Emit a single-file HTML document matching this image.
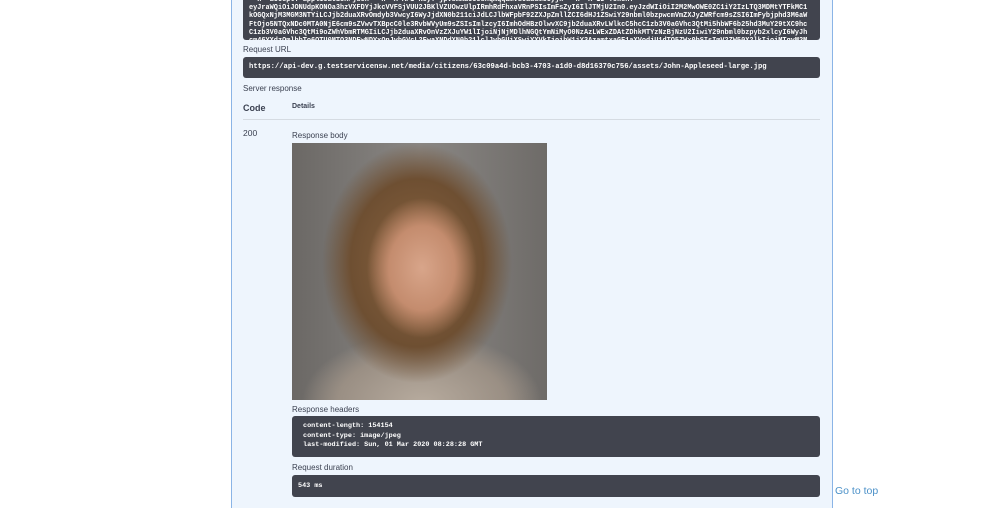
<!DOCTYPE html>
<html><head><style>
body{margin:0;width:999px;height:500px;overflow:hidden;background:#fff;font-family:"Liberation Sans",sans-serif;position:relative}
.panel{position:absolute;left:231px;top:-2px;width:600px;height:510px;background:#eef5fd;border-left:1px solid #8ab4e6;border-right:1px solid #8ab4e6}
.dark{position:absolute;background:#41444e;border-radius:3px;color:#fff;font-family:"Liberation Mono",monospace;font-weight:bold}
.lbl{position:absolute;font-size:8px;color:#3b4151}
.tok{left:243px;top:-4px;width:577px;height:44px;font-size:6.9px;line-height:8.2px;padding:0 6px;box-sizing:border-box;overflow:hidden;white-space:nowrap}
</style></head><body>
<div class="panel"></div>
<div class="dark tok">&nbsp;-H "accept: application/json" -H "X-API-Key: jpvsmmaccosnqmqqamvu6aasmccyjk" -H "X-ID-Token:<br>eyJraWQiOiJONUdpKONOa3hzVXFDYjJkcVVFSjVUU2JBKlVZUOwzUlpIRmhRdFhxaVRnPSIsImFsZyI6IlJTMjU2In0.eyJzdWIiOiI2M2MwOWE0ZC1iY2IzLTQ3MDMtYTFkMC1<br>kOGQxNjM3MGM3NTYiLCJjb2duaXRvOmdyb3VwcyI6WyJjdXN0b211ciJdLCJlbWFpbF92ZXJpZmllZCI6dHJ1ZSwiY29nbml0bzpwcmVmZXJyZWRfcm9sZSI6ImFybjphd3M6aW<br>FtOjo5NTQxNDc0MTA0NjE6cm9sZVwvTXBpcC0le3RvbWVyUm9sZSIsImlzcyI6ImhOdHBzOlwvXC9jb2duaXRvLWlkcC5hcC1zb3V0aGVhc3QtMi5hbWF6b25hd3MuY29tXC9hc<br>C1zb3V0aGVhc3QtMi9oZWhVbmRTMGIiLCJjb2duaXRvOnVzZXJuYW1lIjoiNjNjMDlhNGQtYmNiMyO0NzAzLWExZDAtZDhkMTYzNzBjNzU2IiwiY29nbml0bzpyb2xlcyI6WyJh<br>cm46YXdzOmlhbTo6OTU0MTQ3NDEwNDYxOnJvbGVcL2FwaXNDdXN0b21lclJvbGUiXSwiYXVkIjoibW1jY3AzamtxaGE1aXVodjU1dTQ5ZWx0bSIsImV2ZW50X2lkIjoiMTgyM2M</div>
<div class="lbl" style="left:243px;top:45px">Request URL</div>
<div class="dark" style="left:243px;top:57px;width:577px;height:21px;font-size:7.2px;line-height:21px;padding-left:6px;box-sizing:border-box">https://api-dev.g.testservicensw.net/media/citizens/63c09a4d-bcb3-4703-a1d0-d8d16370c756/assets/John-Appleseed-large.jpg</div>
<div class="lbl" style="left:243px;top:84px">Server response</div>
<div style="position:absolute;left:243px;top:103px;font-size:9px;font-weight:bold;color:#3b4151">Code</div>
<div style="position:absolute;left:292px;top:103px;font-size:7px;font-weight:bold;color:#3b4151">Details</div>
<div style="position:absolute;left:243px;top:119px;width:577px;height:1px;background:#d5dbe2"></div>
<div style="position:absolute;left:243px;top:128px;font-size:8.5px;color:#3b4151">200</div>
<div class="lbl" style="left:292px;top:131px">Response body</div>
<div style="position:absolute;left:292px;top:143px;width:255px;height:257px;background:radial-gradient(ellipse 55px 70px at 130px 125px,#d8a58a 0,#c48c6e 60%,transparent 100%),radial-gradient(ellipse 95px 120px at 125px 120px,#8a6440 0,#6e4f32 70%,transparent 100%),radial-gradient(ellipse 120px 70px at 130px 260px,#b7ab9e 0,#9a8f84 70%,transparent 100%),linear-gradient(90deg,#6b6865,#8a8784 50%,#6e6b68)"></div>
<div class="lbl" style="left:292px;top:405px">Response headers</div>
<div class="dark" style="left:292px;top:416px;width:528px;height:41px;font-size:6.8px;line-height:9.5px;padding:6px 11px;box-sizing:border-box">content-length: 154154<br>content-type: image/jpeg<br>last-modified: Sun, 01 Mar 2020 08:28:28 GMT</div>
<div class="lbl" style="left:292px;top:463px">Request duration</div>
<div class="dark" style="left:292px;top:475px;width:528px;height:22px;font-size:6.8px;line-height:22px;padding-left:6px;box-sizing:border-box">543 ms</div>
<div style="position:absolute;left:835px;top:485px;font-size:10.5px;color:#4a90c8">Go to top</div>
</body></html>
